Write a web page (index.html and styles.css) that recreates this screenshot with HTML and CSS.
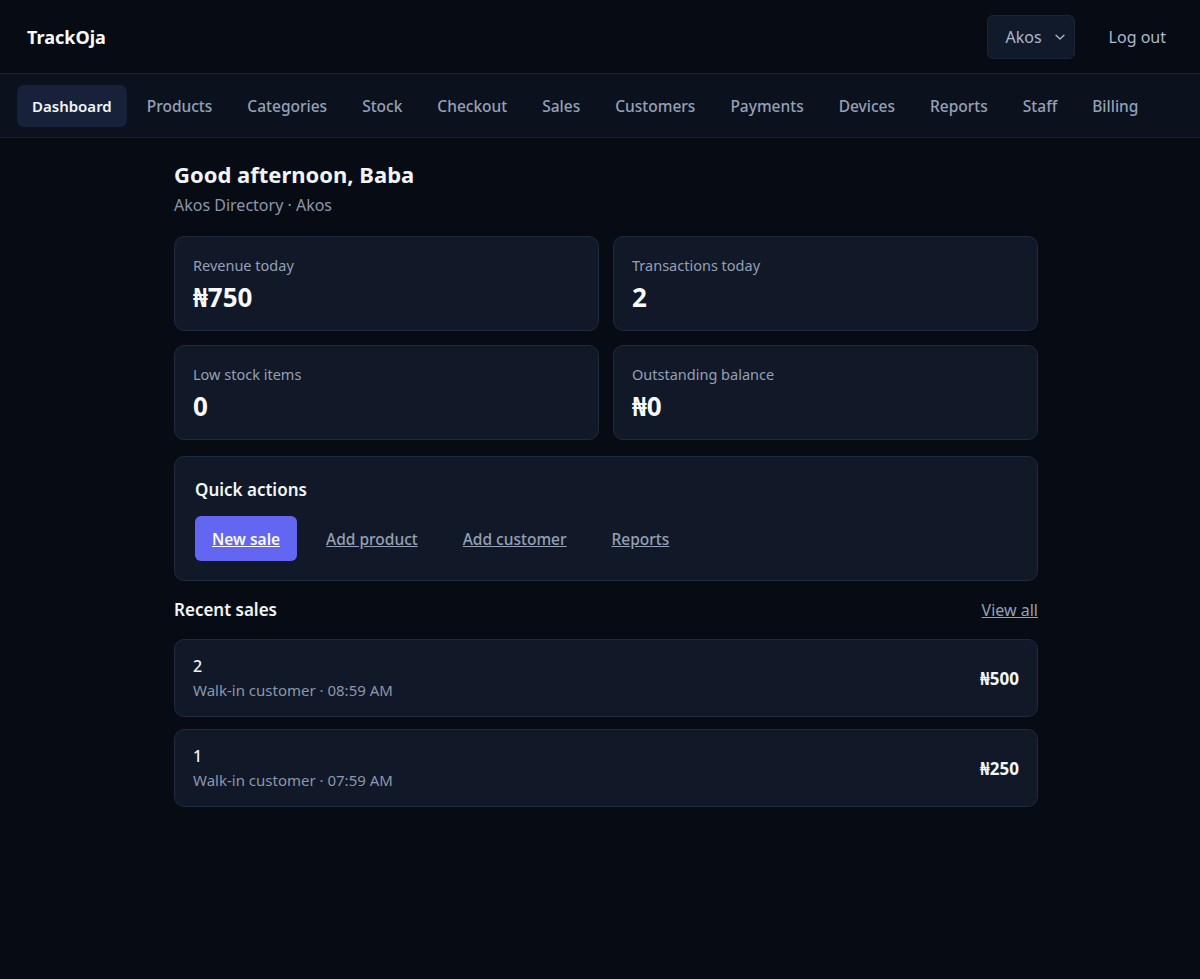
FILE: index.html
```html
<!DOCTYPE html>
<html lang="en">
<head>
<meta charset="utf-8">
<title>TrackOja</title>
<link rel="stylesheet" href="styles.css">
</head>
<body>
<header class="topbar">
  <div class="brand">TrackOja</div>
  <div class="top-actions">
    <button class="org-select">Akos
      <svg class="chev" width="14" height="14" viewBox="0 0 14 14"><path d="M3 5.2 7 9l4-3.8" fill="none" stroke="currentColor" stroke-width="1.3" stroke-linecap="round" stroke-linejoin="round"/></svg>
    </button>
    <a class="logout" href="#">Log out</a>
  </div>
</header>
<nav class="nav">
  <a class="nav-item active" href="#">Dashboard</a>
  <a class="nav-item" href="#">Products</a>
  <a class="nav-item" href="#">Categories</a>
  <a class="nav-item" href="#">Stock</a>
  <a class="nav-item" href="#">Checkout</a>
  <a class="nav-item" href="#">Sales</a>
  <a class="nav-item" href="#">Customers</a>
  <a class="nav-item" href="#">Payments</a>
  <a class="nav-item" href="#">Devices</a>
  <a class="nav-item" href="#">Reports</a>
  <a class="nav-item" href="#">Staff</a>
  <a class="nav-item" href="#">Billing</a>
</nav>
<main class="main">
  <h1 class="greet">Good afternoon, Baba</h1>
  <p class="sub">Akos Directory · Akos</p>
  <section class="stats">
    <div class="card stat"><div class="stat-label">Revenue today</div><div class="stat-value">₦750</div></div>
    <div class="card stat"><div class="stat-label">Transactions today</div><div class="stat-value">2</div></div>
    <div class="card stat"><div class="stat-label">Low stock items</div><div class="stat-value">0</div></div>
    <div class="card stat"><div class="stat-label">Outstanding balance</div><div class="stat-value">₦0</div></div>
  </section>
  <section class="card quick">
    <h2 class="quick-title">Quick actions</h2>
    <div class="quick-row">
      <a class="btn-primary" href="#">New sale</a>
      <a class="qlink" href="#">Add product</a>
      <a class="qlink" href="#">Add customer</a>
      <a class="qlink" href="#">Reports</a>
    </div>
  </section>
  <div class="recent-head">
    <h2 class="recent-title">Recent sales</h2>
    <a class="view-all" href="#">View all</a>
  </div>
  <div class="sale-list">
    <div class="card sale">
      <div><div class="sale-id">2</div><div class="sale-meta">Walk-in customer · 08:59 AM</div></div>
      <div class="sale-amt">₦500</div>
    </div>
    <div class="card sale">
      <div><div class="sale-id">1</div><div class="sale-meta">Walk-in customer · 07:59 AM</div></div>
      <div class="sale-amt">₦250</div>
    </div>
  </div>
</main>
</body>
</html>
```
FILE: styles.css
```css
* { box-sizing: border-box; }
html, body { margin: 0; padding: 0; }
body {
  background: #070b14;
  color: #e5e7eb;
  font-family: "Noto Sans", "Open Sans", sans-serif;
  min-height: 979px;
}
a { color: inherit; }
.topbar {
  height: 74px;
  display: flex;
  align-items: center;
  justify-content: space-between;
  padding: 0 34px 0 27px;
  border-bottom: 1px solid #1a2232;
}
.brand { font-size: 18px; font-weight: 700; color: #f8fafc; }
.top-actions { display: flex; align-items: center; gap: 34px; }
.org-select {
  height: 44px;
  width: 88px;
  display: flex;
  align-items: center;
  justify-content: space-between;
  padding: 0 7px 0 18px;
  background: #111a2b;
  border: 1px solid #1c2536;
  border-radius: 6px;
  color: #aeb8cb;
  font: inherit;
  font-size: 16px;
}
.chev { color: #aeb8cb; }
.logout { color: #aeb8cb; text-decoration: none; font-size: 16px; }
.nav {
  height: 64px;
  display: flex;
  align-items: center;
  gap: 5px;
  padding: 0 17px;
  background: #0b111d;
  border-bottom: 1px solid #1a2232;
}
.nav-item {
  height: 42px;
  display: flex;
  align-items: center;
  padding: 0 15px;
  border-radius: 7px;
  text-decoration: none;
  color: #95a1b8;
  font-size: 15.5px;
  font-weight: 500;
}
.nav-item.active { background: #18213a; color: #f1f5f9; font-weight: 600; font-size: 15px; padding: 0 15px 0 15px; }
.main { width: 864px; margin-left: 174px; padding-top: 21px; }
.greet { margin: 0; font-size: 22px; font-weight: 700; color: #f1f5f9; line-height: 30px; }
.sub { margin: 4px 0 0; font-size: 16px; color: #8c97ad; line-height: 24px; }
.stats {
  margin-top: 19px;
  display: grid;
  grid-template-columns: 1fr 1fr;
  gap: 14px;
}
.card {
  background: #111827;
  border: 1px solid #1f2a3c;
  border-radius: 10px;
}
.stat { height: 95px; padding: 18px 18px; }
.stat-label { font-size: 14.5px; color: #94a0b6; line-height: 20px; }
.stat-value { font-size: 26px; font-weight: 700; color: #f8fafc; line-height: 34px; margin-top: 5px; }
.quick { margin-top: 16px; padding: 21px 20px 20px; height: 125px; }
.quick-title { margin: 0; font-size: 17px; font-weight: 600; color: #f1f5f9; line-height: 24px; }
.quick-row { margin-top: 14px; display: flex; align-items: center; gap: 45px; }
.btn-primary {
  height: 45px;
  padding: 0 17px;
  display: flex;
  align-items: center;
  background: #6366f1;
  border-radius: 6px;
  color: #f8fafc;
  font-size: 15.5px;
  font-weight: 600;
  margin-right: -16px;
}
.qlink { color: #94a0b6; font-size: 15.5px; font-weight: 500; }
.recent-head {
  margin-top: 17px;
  display: flex;
  justify-content: space-between;
  align-items: center;
}
.recent-title { margin: 0; font-size: 17px; font-weight: 600; color: #f1f5f9; line-height: 24px; }
.view-all { color: #94a0b6; font-size: 16px; }
.sale-list { margin-top: 17px; display: flex; flex-direction: column; gap: 12px; }
.sale {
  height: 78px;
  display: flex;
  align-items: center;
  justify-content: space-between;
  padding: 0 18px;
}
.sale-id { font-size: 16px; font-weight: 500; color: #f1f5f9; line-height: 24px; }
.sale-meta { font-size: 15px; color: #8c97ad; line-height: 24px; }
.sale-amt { font-size: 17px; font-weight: 700; color: #f1f5f9; }
```
